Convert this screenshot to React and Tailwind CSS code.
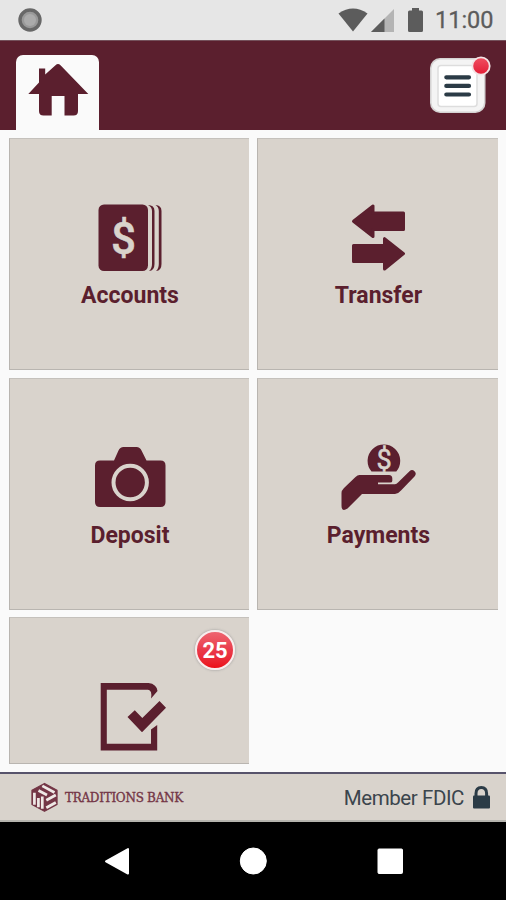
const MAROON = "#5b1f2e";
const SAND = "#d9d3cc";

function StatusBar() {
  return (
    <div className="flex h-10 shrink-0 items-center bg-[#e6e6e6] pl-[18px] pr-3">
      <svg width="24" height="24" viewBox="18 8 24 24">
        <circle cx="30" cy="20" r="10" fill="#999" stroke="#686868" strokeWidth="3.4" />
        <circle cx="30" cy="20" r="6" fill="#ababab" />
      </svg>
      <svg className="ml-auto" width="86" height="28" viewBox="338 6 86 28" fill="#5c5c5c">
        <path d="M338.500 13.500Q353 3.500 367.500 13.500L353 31.500Z" />
        <path d="M394 9V32H371Z" fill="#b4b4b4" />
        <path d="M384.500 18.500V32H371Z" />
        <path d="M412 8H419V10.500H421.500Q423 10.500 423 12V30.500Q423 32 421.500 32H409.500Q408 32 408 30.500V12Q408 10.500 409.500 10.500H412Z" />
      </svg>
      <span className="ml-[11px] mt-[2px] w-[59px] whitespace-nowrap text-[23.5px] leading-none text-[#5c5c5c] [-webkit-text-stroke:0.3px_#5c5c5c]">11:00</span>
    </div>
  );
}

function Header() {
  return (
    <header className="flex h-[90px] shrink-0 items-start justify-between border-t border-[#74515b] bg-[#5b1f2e] pl-4 pr-[14px] pt-[14px]">
      <div className="h-[75px] w-[83px] rounded-t-[7px] bg-[#fafafa]">
        <svg width="83" height="75" viewBox="16 55 83 75" fill={MAROON}>
          <path d="M39 68.500H45.200V74.500L55.500 65.200Q58 63 60.500 65.200L88.300 94H78V111Q78 115.500 73.500 115.500H64.500V96H51.700V115.500H43.500Q39 115.500 39 111V94H28.300L39 82.500Z" />
        </svg>
      </div>
      <svg width="62" height="62" viewBox="430 55 62 62">
        <defs>
          <linearGradient id="menuDot" x2="0" y2="1">
            <stop stopColor="#f05062" />
            <stop offset="1" stopColor="#e31c35" />
          </linearGradient>
        </defs>
        <rect x="430" y="58" width="55.500" height="55" rx="10" fill="#d5d3d3" />
        <rect x="431.500" y="59.500" width="52.500" height="52" rx="9" fill="#f4f4f4" />
        <rect x="438" y="65.500" width="39" height="41" rx="3" fill="#fff" stroke="#ddd" strokeWidth="1.500" />
        <path d="M446.300 77.300H469M446.300 85.900H469M446.300 94.500H469" stroke="#2b3b46" strokeWidth="4.200" strokeLinecap="round" />
        <circle cx="481" cy="66" r="8.700" fill="url(#menuDot)" stroke="#f3e4e6" strokeWidth="1.800" />
      </svg>
    </header>
  );
}

function Tile({ label, viewBox, children }) {
  return (
    <div className="flex flex-col items-center overflow-hidden border-y border-l border-b-[#b9b5b0] border-l-[#b9b5b0] border-t-[#c5c1bc] bg-[#d9d3cc] pt-[61px]">
      <svg className="shrink-0" width="240" height="75" viewBox={viewBox} fill={MAROON}>{children}</svg>
      {label && <span className="ml-px mt-[7px] text-[23px] font-bold leading-7 text-[#5b1f2e]">{label}</span>}
    </div>
  );
}

function Tiles() {
  return (
    <main className="grid h-[642px] shrink-0 grid-cols-[240px_241px] grid-rows-[232px_232px_147px] content-start gap-x-2 gap-y-[7.5px] bg-[#fafafa] pl-[9px] pt-2">
      <Tile label="Accounts" viewBox="10 200 240 75">
        <rect x="98.500" y="204.500" width="49.500" height="66.500" rx="5.500" />
        <path d="M148 205Q154.500 205 154.500 211V264Q154.500 270.500 149 271Q152 268.500 152 264V211Q152 207 148 205ZM155.500 205Q161.500 205.500 161.500 211V264Q161.500 270.500 156 271Q158.800 268.500 158.800 264V211Q158.800 207 155.500 205Z" />
        <text x="123.500" y="253.500" textAnchor="middle" fontSize="45" fontWeight="500" fontFamily="Roboto, sans-serif" fill={SAND} stroke={SAND} strokeWidth=".5" textLength="25" lengthAdjust="spacingAndGlyphs">$</text>
      </Tile>
      <Tile label="Transfer" viewBox="258 200 240 75">
        <g stroke={MAROON} strokeWidth="3" strokeLinejoin="round">
          <path d="M353.500 221.300L373 206V213H403.500V229.500H373V236.500Z" />
          <path d="M403.500 253.700L384.500 238.700V245.500H353.500V261.500H384.500V269Z" />
        </g>
      </Tile>
      <Tile label="Deposit" viewBox="10 440 240 75">
        <path d="M100 460.500H114L118.500 450.500Q120 447 123.500 447H136.500Q140 447 141.500 450.500L146.500 460.500H160.500Q165.500 460.500 165.500 465.500V502Q165.500 507 160.500 507H100Q95 507 95 502V465.500Q95 460.500 100 460.500Z" />
        <circle cx="130.200" cy="482.500" r="16.700" fill="none" stroke={SAND} strokeWidth="4" />
      </Tile>
      <Tile label="Payments" viewBox="258 440 240 75">
        <path d="M371.500 471.500A16.300 16.300 0 1 1 396.300 471.500Z" />
        <text x="384" y="469" textAnchor="middle" fontSize="27" fontWeight="400" fontFamily="Roboto, sans-serif" fill={SAND} stroke={SAND} strokeWidth=".6">$</text>
        <path d="M359.500 475H389Q392.300 475 392.300 478.500V481Q392.300 482.500 390 482.500H378V484.300H395Q396.500 484.300 398 482.500L409.500 471.200Q412 469 414.500 471.200Q417 473.700 414.500 476.500L401 490.500Q398 494 395 494H362L347.500 508.500Q341.500 512.500 341.500 505.500V493Q341.500 490.500 344 488L355.500 477Q357.500 475 359.500 475Z" />
      </Tile>
      <Tile viewBox="10 679 240 75">
        <path d="M151 698.500L157.500 691Q157.800 688.500 155 685.800Q152.500 683 148.500 683H100.700V750.500H157.200V725L151 729.500V743.800H106.800V689.800H148Q152.500 690.500 151 698.500Z" />
        <path d="M127.500 717L134.800 710.300L142.300 718L159.500 701L166 707.800L142 732.300Z" />
      </Tile>
    </main>
  );
}

function CountBadge() {
  return (
    <div className="absolute left-[195px] top-[630px] flex size-10 items-center justify-center rounded-full border-2 border-[#f8eded] bg-linear-to-b from-[#ee6470] via-[#e9394a] to-[#ec0c16] pt-px text-[22px] font-bold leading-none text-white shadow-[0_0_2px_1px_#9997]">25</div>
  );
}

function Footer() {
  return (
    <footer className="flex h-[50px] shrink-0 items-center border-b-2 border-t-2 border-b-[#b5b4ae] border-t-[#57536b] bg-[#d9d3cc] pl-[30px] pr-[15px]">
      <svg width="29" height="32" viewBox="30 781 29 32" fill="none">
        <path d="M44.500 783.500L57 790.300V804.500L44.500 811.300L32 804.500V790.300Z" fill="#743646" stroke="#743646" strokeWidth="1.300" strokeLinejoin="round" />
        <path d="M42.300 785.900L54.500 792.500M38.500 790.500L47 795M34.400 792.800V804.800M38.400 798V807.200M42.300 796.500V808.800M46.300 800.300L55.800 795M46.300 807.800L55.800 802.500" stroke="#efe9e6" strokeWidth="2.700" />
      </svg>
      <span className="ml-[6px] mt-[2px] whitespace-nowrap font-['DejaVu_Serif',serif] text-[12px] leading-none tracking-[-0.28px] text-[#743646] [-webkit-text-stroke:0.35px_#743646]">TRADITIONS BANK</span>
      <span className="ml-auto mt-[2px] whitespace-nowrap text-[20.5px] leading-none tracking-[-0.42px] text-[#3b454d]">Member FDIC</span>
      <svg className="ml-2" width="19" height="26" viewBox="472 784 19 26">
        <path d="M476 797V793.500Q476 787.500 481.300 787.500T486.600 793.500V797" fill="none" stroke="#2b3b46" strokeWidth="3" />
        <rect x="473" y="795.500" width="17" height="13" rx="1" fill="#2b3b46" />
      </svg>
    </footer>
  );
}

function NavigationBar() {
  return (
    <nav className="flex h-[78px] shrink-0 items-center bg-black pl-[104px] pr-[102px]">
      <svg className="w-full" height="30" viewBox="104 846 300 30" fill="#fff" stroke="#fff" strokeLinejoin="round">
        <path d="M106 861.300L128 849V873.600Z" strokeWidth="2" />
        <circle cx="253.300" cy="861" r="13" />
        <rect x="378" y="849" width="24.500" height="24.500" rx="1" />
      </svg>
    </nav>
  );
}

export default function App() {
  return (
    <div className="relative flex h-[900px] w-[506px] flex-col overflow-hidden bg-[#fafafa] font-['Roboto','Liberation_Sans',sans-serif]">
      <StatusBar />
      <Header />
      <Tiles />
      <CountBadge />
      <Footer />
      <NavigationBar />
    </div>
  );
}
